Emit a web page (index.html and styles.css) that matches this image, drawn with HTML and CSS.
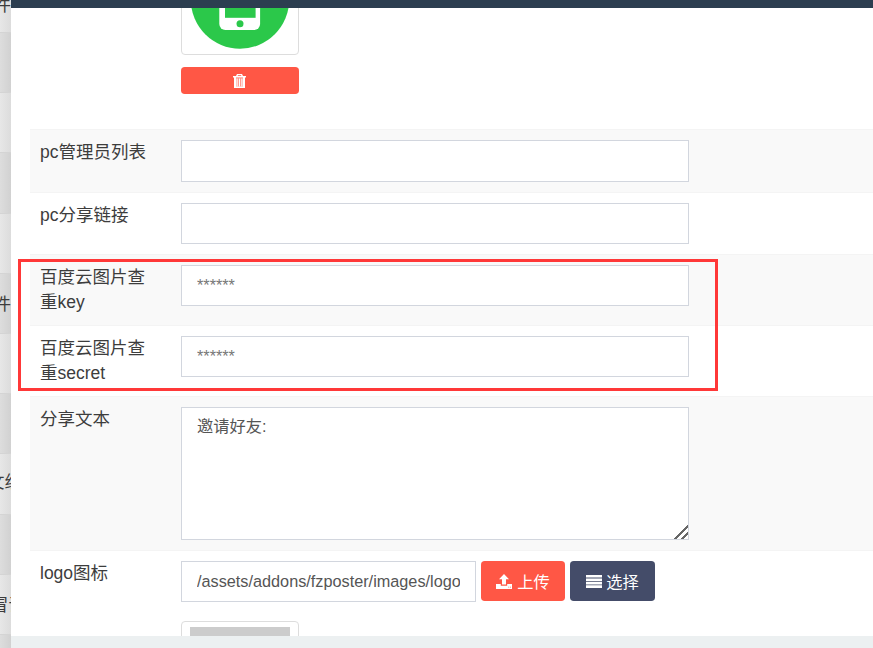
FILE: index.html
```html
<!DOCTYPE html>
<html lang="zh-CN">
<head>
<meta charset="utf-8">
<title>配置</title>
<link rel="stylesheet" href="styles.css">
</head>
<body>
<div class="page">
  <aside class="strip">
    <div class="strip-row light first"><span>件</span></div>
    <div class="strip-row dark"></div>
    <div class="strip-row light"></div>
    <div class="strip-row dark"></div>
    <div class="strip-row light"></div>
    <div class="strip-row dark"><span>件</span></div>
    <div class="strip-row light"></div>
    <div class="strip-row dark"></div>
    <div class="strip-row light raised"><span class="clip-near">文组</span></div>
    <div class="strip-row dark"></div>
    <div class="strip-row light"><span class="clip-far">冒语</span></div>
    <div class="strip-row dark"></div>
  </aside>
  <section class="modal">
    <div class="modal-top"></div>
    <div class="modal-body">
      <div class="image-row">
        <div class="thumb thumb-clipped">
          <svg class="thumb-art" viewBox="182 -2 116 55" width="116" height="55" aria-hidden="true">
            <circle cx="240" cy="-1.500" r="49.200" fill="#2bc84a"/>
            <rect x="219.300" y="-20" width="40.800" height="49" rx="6" fill="#fff"/>
            <rect x="225" y="-20" width="30.600" height="36.800" fill="#2bc84a"/>
            <circle cx="240" cy="22.700" r="3.500" fill="#2bc84a"/>
          </svg>
        </div>
        <button class="btn btn-red btn-delete" type="button" aria-label="删除">
          <svg viewBox="0 0 13 14" width="13" height="14" aria-hidden="true">
            <path fill="#fff" d="M4 0h5l1 2h3v1.500h-1V14H1V3.500H0V2h3zM5 1.300 4.600 2h3.800l-.4-.7zM3 3.500V12.500h7V3.500z"/>
            <path fill="#fff" d="M1.500 3.500h10v9.500h-10z" opacity=".35"/>
            <path fill="#fff" d="M3.500 4.500h1.200v8H3.500zM5.900 4.500h1.200v8H5.900zM8.300 4.500h1.200v8H8.300z"/>
          </svg>
        </button>
      </div>

      <div class="form-row shaded">
        <label class="form-label">pc管理员列表</label>
        <input class="field field-first" type="text" value="">
      </div>
      <div class="form-row">
        <label class="form-label">pc分享链接</label>
        <input class="field" type="text" value="">
      </div>
      <div class="form-row shaded">
        <label class="form-label">百度云图片查重key</label>
        <input class="field field-secret" type="text" value="******">
      </div>
      <div class="form-row">
        <label class="form-label">百度云图片查重secret</label>
        <input class="field field-secret" type="text" value="******">
      </div>
      <div class="form-row shaded">
        <label class="form-label">分享文本</label>
        <textarea class="field field-area">邀请好友:</textarea>
      </div>
      <div class="form-row">
        <label class="form-label">logo图标</label>
        <div class="upload-col">
          <div class="upload-line">
            <input class="field field-path" type="text" value="/assets/addons/fzposter/images/logo">
            <button class="btn btn-red btn-action btn-upload" type="button">
              <svg viewBox="0 0 16 15" width="16" height="15" aria-hidden="true">
                <path fill="#fff" d="M8 0l5 5.200H10V10.500H6V5.200H3z"/>
                <path fill="#fff" d="M0 10h4.800v1.800h6.400V10H16v5H0z"/>
                <path fill="#ff5745" d="M12.300 12.700h.9v.9h-.9zM14 12.700h.9v.9H14z"/>
              </svg>
              <span>上传</span>
            </button>
            <button class="btn btn-navy btn-action btn-choose" type="button">
              <svg viewBox="0 0 16 13" width="16" height="13" aria-hidden="true">
                <path fill="#fff" d="M0 0h16v2.600H0zM0 3.400h16v2.600H0zM0 6.800h16v2.600H0zM0 10.200h16V13H0z"/>
              </svg>
              <span>选择</span>
            </button>
          </div>
          <div class="thumb thumb-low"><div class="thumb-fill"></div></div>
        </div>
      </div>
    </div>
    <div class="modal-foot"></div>
  </section>
  <div class="highlight"></div>
</div>
</body>
</html>
```

FILE: styles.css
```css
* {
  box-sizing: border-box;
}

html,
body {
  margin: 0;
  padding: 0;
}

body {
  font-family: "Liberation Sans", "Noto Sans CJK SC", sans-serif;
  color: #333;
  background: #fff;
}

.page {
  position: relative;
  display: flex;
  width: 873px;
  height: 648px;
  overflow: hidden;
}

/* dimmed page behind the dialog */
.strip {
  flex: 0 0 11px;
  width: 11px;
  overflow: hidden;
}

.strip-row {
  display: flex;
  justify-content: flex-end;
  height: 60.2px;
  border-bottom: 1px solid #d4d4d4;
  font-size: 17.5px;
  line-height: 25px;
  color: #3c3c3c;
  white-space: nowrap;
  padding-top: 18px;
}

.strip-row span {
  flex: none;
}

.strip-row .clip-near {
  margin-right: -11px;
}

.strip-row .clip-far {
  margin-right: -15px;
}

.strip-row.raised {
  padding-top: 16px;
}

.strip-row.first {
  height: 33px;
  padding-top: 0;
  line-height: 10px;
  align-items: flex-start;
}

.strip-row.light {
  background: linear-gradient(90deg, #e7e7e7, #dcdcdc);
}

.strip-row.dark {
  background: linear-gradient(90deg, #dddddd, #d1d1d1);
}

/* dialog */
.modal {
  flex: 1;
  min-width: 0;
  display: flex;
  flex-direction: column;
  background: #fff;
}

.modal-top {
  flex: 0 0 8px;
  background: #2c3e50;
}

.modal-body {
  flex: 1;
  min-height: 0;
  overflow: hidden;
  padding-left: 19px;
}

.modal-foot {
  flex: 0 0 12px;
  background: #ecf0f1;
}

.image-row {
  display: flow-root;
  height: 121px;
  padding-left: 151px;
}

.thumb {
  width: 118px;
  border: 1px solid #ddd;
  border-radius: 4px;
  background: #fff;
}

.thumb-clipped {
  margin-top: -10px;
  height: 57px;
  overflow: hidden;
}

.thumb-art {
  display: block;
}

.btn {
  display: inline-flex;
  align-items: center;
  justify-content: center;
  border: 0;
  border-radius: 3.75px;
  color: #fff;
  font-family: inherit;
  font-size: 16.25px;
  padding: 0;
}

.btn-red {
  background: #ff5745;
}

.btn-navy {
  background: #444c69;
}

.btn-delete {
  display: flex;
  width: 118px;
  height: 27px;
  margin-top: 12px;
  padding-right: 1px;
}

.form-row {
  display: grid;
  grid-template-columns: 141px 508px;
  align-items: start;
  padding: 10px;
  border-top: 1px solid #f4f4f4;
}

.form-row.shaded {
  background: #f9f9f9;
}

.form-label {
  padding-right: 20px;
  font-size: 17.5px;
  line-height: 25px;
  color: #3d3d3d;
}

.field {
  display: block;
  width: 100%;
  height: 41px;
  margin: 0;
  padding: 0 15px;
  border: 1px solid #d2d6de;
  border-radius: 0;
  outline: 0;
  background: #fff;
  font-family: inherit;
  font-size: 16.25px;
  color: #555;
}

.field-first {
  height: 42px;
}

.field-secret {
  color: #777;
}

.field-area {
  height: 133px;
  padding-top: 7px;
  line-height: 23px;
  resize: vertical;
}

.field-area::-webkit-resizer {
  background: linear-gradient(135deg, transparent 52%, #666 52%, #666 62%, transparent 62%, transparent 74%, #666 74%, #666 84%, transparent 84%);
}

.upload-line {
  display: flex;
  gap: 5px;
}

.field-path {
  flex: 0 0 295px;
  width: 295px;
}

.btn-action {
  flex: none;
  gap: 5px;
  height: 40px;
}

.btn-upload {
  width: 84px;
}

.btn-choose {
  width: 85px;
  gap: 4px;
}

.thumb-low {
  margin-top: 19px;
  height: 60px;
  padding: 5px 8px;
}

.thumb-fill {
  width: 100px;
  height: 50px;
  background: #ccc;
}

/* red annotation drawn over the screenshot */
.highlight {
  position: absolute;
  left: 18px;
  top: 259px;
  width: 700px;
  height: 132px;
  border: 3px solid #ff3838;
  pointer-events: none;
}
```
